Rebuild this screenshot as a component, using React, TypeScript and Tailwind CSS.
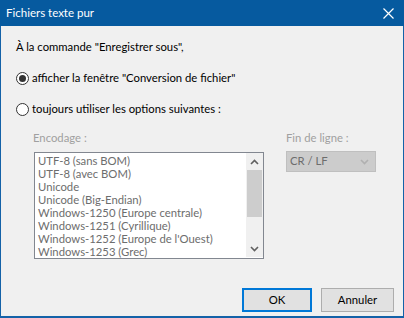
import React from "react";

const encodings = [
  "UTF-8 (sans BOM)",
  "UTF-8 (avec BOM)",
  "Unicode",
  "Unicode (Big-Endian)",
  "Windows-1250 (Europe centrale)",
  "Windows-1251 (Cyrillique)",
  "Windows-1252 (Europe de l'Ouest)",
  "Windows-1253 (Grec)",
];

function Radio({ checked }: { checked?: boolean }) {
  return (
    <span className="w-[13px] h-[13px] rounded-full border border-[#333333] bg-white flex items-center justify-center shrink-0">
      {checked && <span className="w-[7px] h-[7px] rounded-full bg-[#333333]" />}
    </span>
  );
}

function Chevron({ up, color = "#606060" }: { up?: boolean; color?: string }) {
  return (
    <svg width="9" height="6" viewBox="0 0 9 6">
      <path
        d={up ? "M1 5 L4.5 1.5 L8 5" : "M1 1 L4.5 4.5 L8 1"}
        fill="none"
        stroke={color}
        strokeWidth="1.6"
      />
    </svg>
  );
}

export default function App() {
  return (
    <div
      className="w-[404px] h-[318px] bg-[#f0f0f0] border-x border-b-2 border-[#1462a8] flex flex-col text-[11.3px] text-black"
      style={{ fontFamily: 'Lato, "Segoe UI", sans-serif' }}
    >
      <div className="h-[26px] bg-[#065a9f] -mx-px flex items-center justify-between pl-[6px] pr-[10px] text-white text-[11.5px]">
        <span className="leading-4">Fichiers texte pur</span>
        <svg width="11" height="11" viewBox="0 0 11 11">
          <path d="M0.5 0.5 L10.5 10.5 M10.5 0.5 L0.5 10.5" stroke="#ffffff" strokeWidth="1.2" />
        </svg>
      </div>

      <div className="flex flex-col pl-[15px] pr-[9px]">
        <p className="mt-[13px] leading-4">À la commande "Enregistrer sous",</p>

        <label className="mt-[15px] flex items-center gap-[3px] leading-4">
          <Radio checked />
          <span>afficher la fenêtre "Conversion de fichier"</span>
        </label>

        <label className="mt-[15px] flex items-center gap-[3px] leading-4">
          <Radio />
          <span>toujours utiliser les options suivantes :</span>
        </label>

        <div className="flex pl-[17px] mt-[13px]">
          <div className="flex flex-col">
            <span className="leading-4 text-[#a0a0a0]">Encodage :</span>
            <div className="mt-[6px] ml-px w-[230px] h-[107px] border border-[#828790] bg-white flex">
              <ul className="flex-1 pt-[1px] pl-[3px] text-[#6d6d6d] overflow-hidden">
                {encodings.map((e) => (
                  <li key={e} className="leading-[13px] h-[13px] whitespace-nowrap">
                    {e}
                  </li>
                ))}
              </ul>
              <div className="w-[17px] bg-[#f0f0f0] flex flex-col items-center mb-px">
                <div className="h-[17px] flex items-center justify-center">
                  <Chevron up />
                </div>
                <div className="w-[15px] h-[47px] bg-[#cdcdcd]" />
                <div className="flex-1" />
                <div className="h-[17px] flex items-center justify-center">
                  <Chevron />
                </div>
              </div>
            </div>
          </div>

          <div className="flex flex-col ml-[22px]">
            <span className="leading-4 text-[#a0a0a0]">Fin de ligne :</span>
            <div className="mt-[5px] w-[90px] h-[21px] bg-[#cccccc] border border-[#bfbfbf] flex items-center justify-between pl-[3px] pr-[6px]">
              <span className="text-[#6d6d6d]">CR / LF</span>
              <Chevron color="#b0b0b0" />
            </div>
          </div>
        </div>

        <div className="mt-[29px] flex justify-end gap-[9px]">
          <button className="w-[70px] h-[24px] bg-[#e1e1e1] border-2 border-[#0078d7] leading-4">
            OK
          </button>
          <button className="w-[73px] h-[24px] bg-[#e1e1e1] border border-[#adadad] leading-4">
            Annuler
          </button>
        </div>
      </div>
    </div>
  );
}
